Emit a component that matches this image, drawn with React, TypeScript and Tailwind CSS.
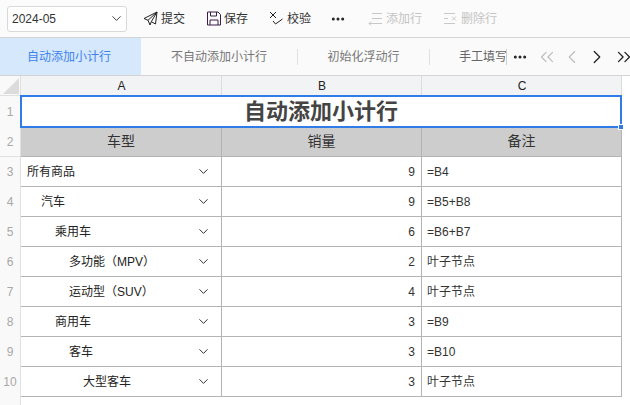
import { ChevronDown, ChevronLeft, ChevronRight, ChevronsLeft, ChevronsRight, Ellipsis } from "lucide-react";

const font = "font-['Arial','Liberation_Sans','Noto_Sans_CJK_SC',sans-serif]";

const rows = [
  { n: 3, name: "所有商品", indent: "pl-[6px]", qty: 9, note: "=B4" },
  { n: 4, name: "汽车", indent: "pl-[20px]", qty: 9, note: "=B5+B8" },
  { n: 5, name: "乘用车", indent: "pl-[34px]", qty: 6, note: "=B6+B7" },
  { n: 6, name: "多功能（MPV）", indent: "pl-[48px]", qty: 2, note: "叶子节点" },
  { n: 7, name: "运动型（SUV）", indent: "pl-[48px]", qty: 4, note: "叶子节点" },
  { n: 8, name: "商用车", indent: "pl-[34px]", qty: 3, note: "=B9" },
  { n: 9, name: "客车", indent: "pl-[48px]", qty: 3, note: "=B10" },
  { n: 10, name: "大型客车", indent: "pl-[62px]", qty: 3, note: "叶子节点" },
];

function SendIcon() {
  return (
    <svg width="15" height="15" viewBox="0 0 15 15" fill="none" stroke="#222" strokeWidth="1">
      <path d="M14 1 1 7.500l4 1.800L14 1ZM14 1 12.500 13l-4.200-2.300L14 1ZM5 9.300 7 14l1.300-3.300" />
    </svg>
  );
}

function SaveIcon() {
  return (
    <svg width="14" height="15" viewBox="0 0 14 15" fill="none" stroke="#3a1d4a" strokeWidth="1">
      <path d="M.5 1h10.500l2.500 2.500v10.500h-13ZM3.500 1v4h6V1M3 14V9h8v5" />
    </svg>
  );
}

function CheckIcon() {
  return (
    <svg width="15" height="15" viewBox="0 0 15 15" fill="none" stroke="#222" strokeWidth="1">
      <path d="m1 1 6 6M7 1 1 7M4 10l2.500 3 7-5" />
    </svg>
  );
}

function AddRowIcon() {
  return (
    <svg width="15" height="15" viewBox="0 0 15 15" fill="none" stroke="#c8c8c8" strokeWidth="1">
      <path d="M4 2.500h10M4 7.500h10M6 12.500h8M1 12.500h5M3 10.500l-2 2 2 2" />
    </svg>
  );
}

function DeleteRowIcon() {
  return (
    <svg width="15" height="15" viewBox="0 0 15 15" fill="none" stroke="#c8c8c8" strokeWidth="1">
      <path d="M1 2.500h11M5 7.500h-4M1 12.500h11M9 5.500l4 4M13 5.500l-4 4" />
    </svg>
  );
}

function ToolButton({ icon, label, muted, className }: { icon: React.ReactNode; label: string; muted?: boolean; className?: string }) {
  return (
    <div className={`flex items-center gap-[3px] text-xs ${muted ? "text-[#c4c4c4]" : "text-[#333]"} ${className ?? ""}`}>
      {icon}
      <span>{label}</span>
    </div>
  );
}

function Cell({ children, className }: { children?: React.ReactNode; className?: string }) {
  return <div className={`flex items-center border-r border-b border-[#b4b4b4] text-xs text-[#222] ${className ?? ""}`}>{children}</div>;
}

function RowHead({ children, className }: { children?: React.ReactNode; className?: string }) {
  return <div className={`flex items-center justify-center bg-[#f9f9f9] border-r border-[#e0e0e0] text-xs text-[#a8a8a8] ${className ?? ""}`}>{children}</div>;
}

export default function App() {
  return (
    <div className={`w-[630px] h-[405px] overflow-hidden bg-white flex flex-col ${font}`}>
      <div className="h-[38px] flex items-center pl-[7px] bg-[#fbfbfb] border-b border-[#d4d4d4] shrink-0">
        <div className="w-[120px] h-[26px] flex items-center justify-between pl-[4px] pr-[2px] bg-white border border-[#d9d9d9] rounded-[3px] text-[12px] text-[#333]">
          <span>2024-05</span>
          <ChevronDown size={15} strokeWidth={1.5} className="text-[#333]" />
        </div>
        <ToolButton icon={<SendIcon />} label="提交" className="ml-[16px]" />
        <ToolButton icon={<SaveIcon />} label="保存" className="ml-[22px]" />
        <ToolButton icon={<CheckIcon />} label="校验" className="ml-[21px]" />
        <Ellipsis size={16} strokeWidth={2.5} className="ml-[19px] text-[#222]" />
        <ToolButton icon={<AddRowIcon />} label="添加行" muted className="ml-[22px]" />
        <ToolButton icon={<DeleteRowIcon />} label="删除行" muted className="ml-[21px]" />
      </div>

      <div className="h-[38px] flex items-center bg-[#fafafa] border-b border-[#d4d4d4] shrink-0 text-xs text-[#777]">
        <div className="w-[141px] shrink-0 h-full flex items-center justify-center pr-[3px] bg-[#d6e8fc] text-[#3d82f0]">自动添加小计行</div>
        <div className="w-[157px] shrink-0 h-[16px] flex items-center justify-center border-r border-[#e0e0e0]">不自动添加小计行</div>
        <div className="w-[132px] shrink-0 h-[16px] flex items-center justify-center border-r border-[#e0e0e0]">初始化浮动行</div>
        <div className="w-[77px] shrink-0 h-[16px] overflow-hidden flex items-center pl-[29px] whitespace-nowrap border-r border-[#cfcfcf] text-[#666]">手工填写</div>
        <Ellipsis size={16} strokeWidth={2.5} className="ml-[5px] shrink-0 text-[#222]" />
        <ChevronsLeft size={22} strokeWidth={1.2} className="ml-[8px] shrink-0 text-[#bbb]" />
        <ChevronLeft size={22} strokeWidth={1.2} className="ml-[3px] shrink-0 text-[#bbb]" />
        <ChevronRight size={22} strokeWidth={1.4} className="ml-[3px] shrink-0 text-[#222]" />
        <ChevronsRight size={22} strokeWidth={1.4} className="ml-[5px] shrink-0 text-[#222]" />
      </div>

      <div className="relative grid grid-cols-[21px_201px_200px_200px] grid-rows-[20px_31px_30px_repeat(8,30px)_9px] w-[622px]">
        <div className="relative bg-[#f9f9f9] border-r border-b border-[#e0e0e0]">
          <div className="absolute right-[1px] bottom-[1px] w-0 h-0 border-l-[16px] border-l-transparent border-b-[16px] border-b-[#dcdcdc]" />
        </div>
        {["A", "B", "C"].map((c) => (
          <div key={c} className="flex items-center justify-center pl-[1px] bg-[#f2f3f5] border-r border-b border-[#dcdcdc] text-xs text-[#222]">{c}</div>
        ))}

        <RowHead className="text-[#666]">1</RowHead>
        <div className="col-span-3 flex items-center justify-center border-b border-[#b4b4b4] text-[22px] font-bold text-[#444] pr-[1px]">自动添加小计行</div>

        <RowHead className="border-b border-b-[#e0e0e0]">2</RowHead>
        {["车型", "销量", "备注"].map((h) => (
          <Cell key={h} className="justify-center bg-[#cdcdcd] text-[14px] text-[#333]">{h}</Cell>
        ))}

        {rows.map((r) => (
          <div key={r.n} className="contents">
            <RowHead>{r.n}</RowHead>
            <Cell className={`justify-between pr-[10px] ${r.indent}`}>
              <span>{r.name}</span>
              <ChevronDown size={15} strokeWidth={1.5} className="text-[#222]" />
            </Cell>
            <Cell className="justify-end pr-[6px] text-[#333]">{r.qty}</Cell>
            <Cell className="pl-[5px] text-[#333]">{r.note}</Cell>
          </div>
        ))}

        <RowHead />

        <div className="absolute left-[20px] right-0 top-[19px] h-[33px] border-2 border-[#2f7be8]" />
        <div className="absolute right-[-2px] top-[48px] w-[6px] h-[6px] bg-[#2f7be8] border border-white" />
      </div>
    </div>
  );
}
